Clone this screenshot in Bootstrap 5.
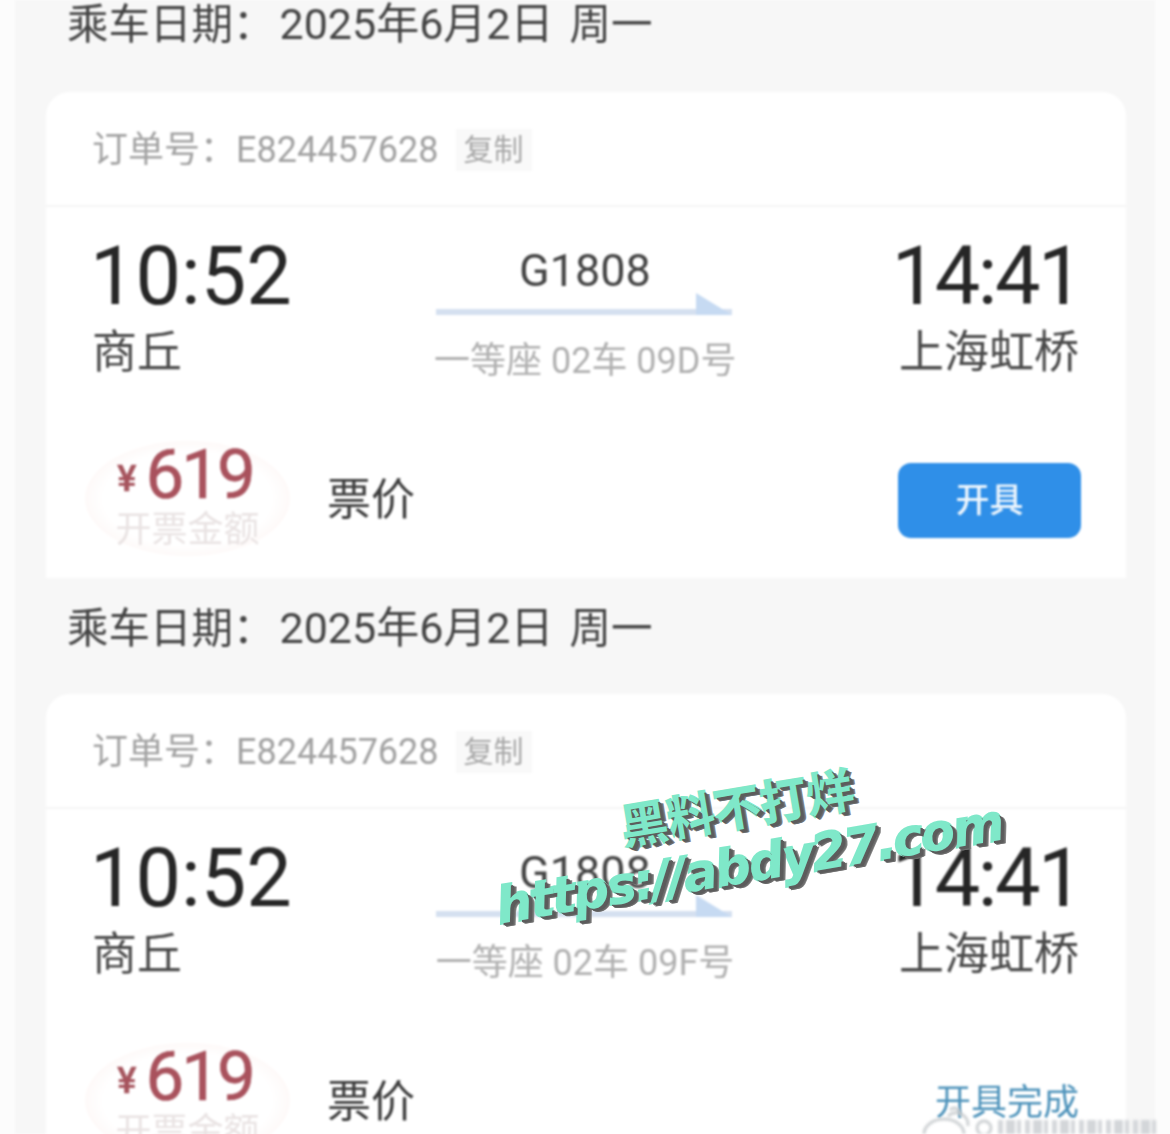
<!DOCTYPE html>
<html lang="zh-CN">
<head>
    <meta charset="UTF-8">
    <title>乘车订单</title>
    <link href="https://cdn.jsdelivr.net/npm/bootstrap@5.3.3/dist/css/bootstrap.min.css" rel="stylesheet">
    <style>
        html, body { height: 1134px; overflow: hidden; background: #fcfcfc; }
        body { font-family: Roboto, "Noto Sans CJK SC", sans-serif; position: relative; }
        .page-wrap { margin: 0 15px; background: #f7f7f7; height: 1134px; padding: 0 30px; filter: blur(.8px); }
        .ride-date { height: 116px; padding-top: 27px; font-size: 41.5px; line-height: 46px; color: #444; margin-left: -8px; margin-right: -8px; white-space: nowrap; padding-left: 30px; }
        .ride-date.first { height: 92px; padding-top: 1px; }
        .date-day { font-size: 43px; margin-left: 5px; }
        .date-week { margin-left: 16px; }
        .order-box { height: 486px; background: #fff; border-radius: 24px 24px 0 0; width: 1080px; margin-left: 1px; overflow: hidden; }
        .order-head { height: 115px; padding: 3px 46px 0; border-bottom: 2px solid #f5f5f5; font-size: 36px; color: #a2a2a2; }
        .copy-tag { font-size: 30px; line-height: 42px; color: #a8a8a8; background: #f9f9f9; padding: 0 8px; margin-left: 17px; }
        .route-row { padding: 25px 47px 0 44px; }
        .col-from { width: 344px; }
        .col-mid { width: 302px; text-align: center; }
        .col-to { flex: 1; text-align: right; }
        .clock { font-size: 81px; line-height: 90px; color: #262626; }
        .col-to .clock { letter-spacing: -2.5px; margin-right: -2px; }
        .station { font-size: 45px; line-height: 62px; color: #4a4a4a; margin-left: 2px; }
        .train-no { font-size: 45px; line-height: 60px; color: #444; margin-top: 9px; }
        .route-arrow { display: block; width: 296px; height: 26px; margin: -10px 0 0 2px; }
        .seat { font-size: 36px; line-height: 48px; color: #b0b0b0; white-space: nowrap; margin-top: 20px; }
        .foot-row { padding: 0 45px 0 39px; margin-top: 56px; }
        .price-oval { width: 205px; height: 115px; border-radius: 50%; background: radial-gradient(ellipse at center, #fff 58%, #fdf3f1 85%, #fff 100%); }
        .price-num { color: #a9525d; font-size: 69px; -webkit-text-stroke: .6px #a9525d; line-height: 66px; height: 66px; letter-spacing: -3px; margin-left: -5px; margin-top: -3px; }
        .price-num span { font-size: 36px; font-weight: 500; margin-right: 9px; vertical-align: 7px; letter-spacing: 0; color: #a5565e; }
        .price-cap { font-size: 36px; line-height: 44px; color: #e9e3e3; white-space: nowrap; }
        .price-label { font-size: 44px; color: #3c3c3c; margin: 2px 0 0 37px; }
        .invoice-btn { width: 183px; height: 75px; border-radius: 13px; background: #2f8fe8; color: #eef6fd; font-size: 34px; font-weight: 500; border: 0; padding: 0; margin-top: 4px; }
        .invoice-done { font-size: 36px; color: #4e93bb; margin: 4px 2px 0 0; }
        .source-mark { position: absolute; left: 922px; top: 1104px; width: 236px; height: 30px; overflow: hidden; filter: blur(1.4px); }
        .source-mark svg { display: block; width: 236px; height: 30px; }
        .stamp { position: absolute; font-family: "DejaVu Sans", "Noto Sans CJK SC", sans-serif; font-weight: 700; color: #7fe8c9; white-space: nowrap; transform-origin: left center; -webkit-text-stroke: 2.5px #7fe8c9; paint-order: stroke fill;
            text-shadow: 2px 2px 0 #5c5c5c, 3px 3px 0 #5c5c5c, 4px 4px 0 #6c6c6c, 5px 4px 0 #888; }
        .stamp-cn { left: 621px; top: 797px; font-size: 47px; line-height: 56px; transform: rotate(-9.5deg); font-family: "Noto Sans CJK SC", sans-serif; }
        .stamp-url { left: 497px; top: 874px; font-size: 50px; line-height: 66px; font-style: italic; transform: rotate(-9.5deg); letter-spacing: -2px; }
    </style>
</head>
<body>
    <div class="page-wrap">
        <div class="ride-date first">乘车日期：<span class="date-day">2025年6月2日</span><span class="date-week">周一</span></div>
        <div class="order-box">
            <div class="order-head d-flex align-items-center">
                <span>订单号：</span><span>E824457628</span><span class="copy-tag">复制</span>
            </div>
            <div class="route-row d-flex">
                <div class="col-from">
                    <div class="clock">10:52</div>
                    <div class="station">商丘</div>
                </div>
                <div class="col-mid">
                    <div class="train-no">G1808</div>
                    <svg class="route-arrow" viewBox="0 0 296 26"><rect x="0" y="18" width="296" height="6" fill="#d5e0f0"/><path d="M260 2 L296 24 L260 24 Z" fill="#c6daf2"/></svg>
                    <div class="seat">一等座 02车 09D号</div>
                </div>
                <div class="col-to">
                    <div class="clock">14:41</div>
                    <div class="station">上海虹桥</div>
                </div>
            </div>
            <div class="foot-row d-flex align-items-center">
                <div class="price-oval d-flex flex-column align-items-center justify-content-center">
                    <div class="price-num"><span>¥</span>619</div>
                    <div class="price-cap">开票金额</div>
                </div>
                <div class="price-label">票价</div>
                <button class="invoice-btn btn ms-auto">开具</button>
            </div>
        </div>
        <div class="ride-date">乘车日期：<span class="date-day">2025年6月2日</span><span class="date-week">周一</span></div>
        <div class="order-box">
            <div class="order-head d-flex align-items-center">
                <span>订单号：</span><span>E824457628</span><span class="copy-tag">复制</span>
            </div>
            <div class="route-row d-flex">
                <div class="col-from">
                    <div class="clock">10:52</div>
                    <div class="station">商丘</div>
                </div>
                <div class="col-mid">
                    <div class="train-no">G1808</div>
                    <svg class="route-arrow" viewBox="0 0 296 26"><rect x="0" y="18" width="296" height="6" fill="#d5e0f0"/><path d="M260 2 L296 24 L260 24 Z" fill="#c6daf2"/></svg>
                    <div class="seat">一等座 02车 09F号</div>
                </div>
                <div class="col-to">
                    <div class="clock">14:41</div>
                    <div class="station">上海虹桥</div>
                </div>
            </div>
            <div class="foot-row d-flex align-items-center">
                <div class="price-oval d-flex flex-column align-items-center justify-content-center">
                    <div class="price-num"><span>¥</span>619</div>
                    <div class="price-cap">开票金额</div>
                </div>
                <div class="price-label">票价</div>
                <div class="invoice-done ms-auto">开具完成</div>
            </div>
        </div>
    </div>
    <!-- faint source mark, its text is not readable in the reference -->
    <div class="source-mark">
        <svg viewBox="0 0 236 30" fill="none" stroke="#c4c8cb" stroke-width="2.5">
            <ellipse cx="22" cy="30" rx="20" ry="15"/>
            <path d="M26 12 a12 12 0 0 1 20 10"/>
            <path d="M28 6 a6 6 0 0 1 10 6"/>
            <circle cx="62" cy="24" r="7"/>
            <path d="M76 24 H234" stroke="#d3d6d9" stroke-width="16" stroke-dasharray="5 3 9 2 4 4"/>
        </svg>
    </div>
    <div class="stamp stamp-cn">黑料不打烊</div>
    <div class="stamp stamp-url">https://abdy27.com</div>
</body>
</html>
